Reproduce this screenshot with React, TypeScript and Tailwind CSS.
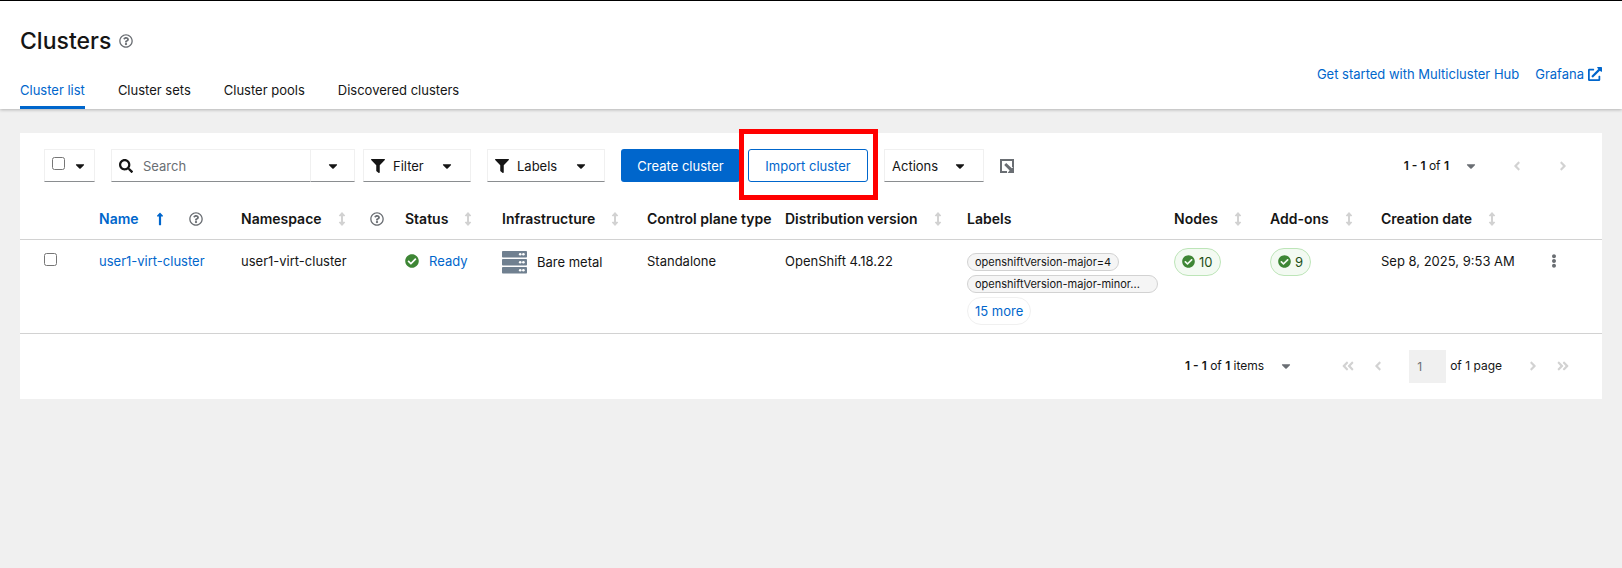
import type { ReactNode } from "react";
import {
  FaAngleDoubleLeft,
  FaAngleDoubleRight,
  FaAngleLeft,
  FaAngleRight,
  FaCaretDown,
  FaCheckCircle,
  FaEllipsisV,
  FaExternalLinkAlt,
  FaFilter,
  FaLongArrowAltUp,
  FaRegQuestionCircle,
  FaSearch,
} from "react-icons/fa";

const tabs = ["Cluster list", "Cluster sets", "Cluster pools", "Discovered clusters"];

interface Column {
  label: string;
  width: string;
  sort?: "active" | "idle";
  help?: boolean;
}

// "Labels" has no width of its own and takes up the remaining space
const columns: Column[] = [
  { label: "Name", width: "w-[142px]", sort: "active", help: true },
  { label: "Namespace", width: "w-[164px]", sort: "idle", help: true },
  { label: "Status", width: "w-[97px]", sort: "idle" },
  { label: "Infrastructure", width: "w-[145px]", sort: "idle" },
  { label: "Control plane type", width: "w-[138px]" },
  { label: "Distribution version", width: "w-[182px]", sort: "idle" },
  { label: "Labels", width: "" },
  { label: "Nodes", width: "w-24", sort: "idle" },
  { label: "Add-ons", width: "w-[111px]", sort: "idle" },
  { label: "Creation date", width: "w-[166px]", sort: "idle" },
];

function SortIcon() {
  return (
    <svg viewBox="0 0 8 14" className="h-3.5 w-2 fill-[#d2d2d2]" aria-hidden="true">
      <path d="M4 0 7.200 3.500 6.500 4.200H5v5.600h1.500l.7.7L4 14 .8 10.500l.7-.7H3V4.200H1.500L.8 3.500z" />
    </svg>
  );
}

function ServerIcon() {
  return (
    <svg viewBox="0 0 25 23" className="h-[23px] w-[25px] shrink-0" aria-hidden="true">
      {[0, 8, 16].map((y) => (
        <g key={y}>
          <rect x="0" y={y} width="25" height="6.600" rx="0.8" fill="#708090" />
          <circle cx="18.200" cy={y + 3.3} r="1.300" fill="#fff" />
          <circle cx="21.400" cy={y + 3.3} r="1.300" fill="#fff" />
        </g>
      ))}
    </svg>
  );
}

function ExportIcon() {
  return (
    <svg viewBox="0 0 14 14" className="h-3.5 w-3.5" fill="#6a6e73" aria-hidden="true">
      <path d="M0 0h14v8h-2V2H2v10h5v2H0z" />
      <path d="M4.200 6 6.200 4l5.600 5.200L14 7.600V14H7.600l2-2.400z" />
    </svg>
  );
}

function StatusPill({ count }: { count: number }) {
  return (
    <span className="inline-flex h-7 items-center gap-1 rounded-full border border-[#bde5b8] bg-[#f3faf2] px-[7px] text-[#1e4f18]">
      <FaCheckCircle className="h-[13px] w-[13px] text-[#3e8635]" />
      {count}
    </span>
  );
}

function Dropdown({ children, className }: { children: ReactNode; className: string }) {
  return (
    <button
      className={`flex h-[33px] items-center justify-between border border-[#f0f0f0] border-b-[#8a8d90] pl-[7px] pr-4 ${className}`}
    >
      <span className="flex items-center gap-2">{children}</span>
      <FaCaretDown className="h-3.5 w-3.5" />
    </button>
  );
}

function PageButton({ label, children }: { label: string; children: ReactNode }) {
  return (
    <button disabled aria-label={label} className="flex h-8 items-center justify-center px-2 text-[#d2d2d2]">
      {children}
    </button>
  );
}

export default function App() {
  return (
    <div className="min-h-screen bg-[#f0f0f0] font-['Inter','Liberation_Sans',sans-serif] text-[13px] leading-5 text-[#151515]">
      <header className="relative flex items-center justify-between border-t border-black bg-white px-5 shadow-[0_1px_3px_rgba(3,3,3,0.25)]">
        <div>
          <div className="flex items-center gap-2 pt-6">
            <h1 className="text-[23px] leading-8 font-medium">Clusters</h1>
            <button aria-label="About clusters" className="text-[#6a6e73]">
              <FaRegQuestionCircle className="h-3.5 w-3.5" />
            </button>
          </div>
          <nav className="mt-[23px] flex gap-[33px]">
            {tabs.map((tab, i) => (
              <a
                key={tab}
                href="#"
                className={`border-b-[3px] pb-1.5 ${i === 0 ? "border-[#06c] text-[#06c]" : "border-transparent"}`}
              >
                {tab}
              </a>
            ))}
          </nav>
        </div>
        <div className="mt-[38px] flex gap-4 text-[#06c]">
          <a href="#">Get started with Multicluster Hub</a>
          <a href="#" className="flex items-center gap-1">
            Grafana
            <FaExternalLinkAlt className="h-3.5 w-3.5" />
          </a>
        </div>
      </header>

      <main className="mx-5 mt-6 bg-white">
        <div className="flex items-center px-6 pt-4">
          <div className="flex h-[33px] w-[51px] items-center gap-2 border border-[#f0f0f0] border-b-[#8a8d90] pl-[7px]">
            <input type="checkbox" aria-label="Select all" className="mb-1 h-[13px] w-[13px]" />
            <button aria-label="Selection options">
              <FaCaretDown className="h-3.5 w-3.5" />
            </button>
          </div>

          <div className="ml-4 flex">
            <label className="flex h-[33px] w-[200px] items-center gap-2.5 border border-[#f0f0f0] border-b-[#8a8d90] pl-[7px]">
              <FaSearch className="h-3.5 w-3.5 shrink-0" />
              <input
                type="text"
                placeholder="Search"
                aria-label="Search"
                className="w-full min-w-0 outline-none placeholder:text-[#6a6e73]"
              />
            </label>
            <button
              aria-label="Search options"
              className="flex w-11 items-center justify-center border border-l-0 border-[#f0f0f0] border-b-[#8a8d90]"
            >
              <FaCaretDown className="h-3.5 w-3.5" />
            </button>
          </div>

          <Dropdown className="ml-2 w-[108px]">
            <FaFilter className="h-3.5 w-3.5" />
            Filter
          </Dropdown>
          <Dropdown className="ml-4 w-[118px]">
            <FaFilter className="h-3.5 w-3.5" />
            Labels
          </Dropdown>

          <button className="ml-4 h-[33px] w-[119px] rounded-[3px] bg-[#06c] text-white">Create cluster</button>
          <div className="relative ml-2">
            <button className="h-[33px] w-[120px] rounded-[3px] border border-[#06c] text-[#06c]">
              Import cluster
            </button>
            <div className="pointer-events-none absolute -top-5 -right-[10px] -bottom-[18px] -left-[9px] border-[5px] border-[#f00]" />
          </div>
          <Dropdown className="ml-4 w-[100px]">Actions</Dropdown>
          <button aria-label="Export" className="ml-4">
            <ExportIcon />
          </button>

          <div className="ml-auto flex items-center">
            <button className="flex items-center gap-[15px] text-xs">
              <span>
                <b className="font-semibold">1 - 1</b> of <b className="font-semibold">1</b>
              </span>
              <FaCaretDown className="h-3.5 w-3.5 text-[#6a6e73]" />
            </button>
            <div className="ml-6 flex gap-4">
              <PageButton label="Previous page">
                <FaAngleLeft className="h-3.5 w-3.5" />
              </PageButton>
              <PageButton label="Next page">
                <FaAngleRight className="h-3.5 w-3.5" />
              </PageButton>
            </div>
          </div>
        </div>

        <table className="mt-[18px] w-full table-fixed border-collapse text-left">
          <thead>
            <tr className="h-[39px] border-b border-[#d2d2d2] text-sm">
              <th className="w-[79px]" />
              {columns.map(({ label, width, sort, help }) => (
                <th key={label} className={`font-semibold whitespace-nowrap ${width}`}>
                  <div className="flex items-center">
                    {sort ? (
                      <button className={`flex items-center gap-4 ${sort === "active" ? "text-[#06c]" : ""}`}>
                        {label}
                        {sort === "active" ? <FaLongArrowAltUp className="h-3.5 w-2.5" /> : <SortIcon />}
                      </button>
                    ) : (
                      label
                    )}
                    {help && (
                      <button aria-label={`About ${label}`} className="ml-6 text-[#6a6e73]">
                        <FaRegQuestionCircle className="h-3.5 w-3.5" />
                      </button>
                    )}
                  </div>
                </th>
              ))}
              <th className="w-[55px]" />
            </tr>
          </thead>
          <tbody>
            <tr className="border-b border-[#d2d2d2] align-top">
              <td className="pt-[13px] pl-6">
                <input type="checkbox" aria-label="Select user1-virt-cluster" className="block h-[13px] w-[13px]" />
              </td>
              <td className="pt-[11px]">
                <a href="#" className="text-[#06c]">
                  user1-virt-cluster
                </a>
              </td>
              <td className="pt-[11px]">user1-virt-cluster</td>
              <td className="pt-[11px]">
                <span className="flex items-center gap-2.5">
                  <FaCheckCircle className="h-3.5 w-3.5 text-[#3e8635]" />
                  <a href="#" className="text-[#06c]">
                    Ready
                  </a>
                </span>
              </td>
              <td className="pt-[11px]">
                <span className="flex items-center gap-2.5">
                  <ServerIcon />
                  Bare metal
                </span>
              </td>
              <td className="pt-[11px]">Standalone</td>
              <td className="pt-[11px]">OpenShift 4.18.22</td>
              <td className="pt-[13px] pb-2">
                <div className="flex flex-col items-start gap-1">
                  <span className="rounded-full border border-[#d2d2d2] bg-[#f5f5f5] px-[7px] text-[11px] leading-4">
                    openshiftVersion-major=4
                  </span>
                  <span className="w-[191px] rounded-full border border-[#d2d2d2] bg-[#f5f5f5] px-[7px] text-[11px] leading-4">
                    openshiftVersion-major-minor...
                  </span>
                  <button className="rounded-full border border-[#f0f0f0] px-[7px] leading-[26px] text-[#06c]">
                    15 more
                  </button>
                </div>
              </td>
              <td className="pt-2">
                <StatusPill count={10} />
              </td>
              <td className="pt-2">
                <StatusPill count={9} />
              </td>
              <td className="pt-[11px]">Sep 8, 2025, 9:53 AM</td>
              <td className="pt-3.5">
                <button aria-label="Row actions" className="block text-[#6a6e73]">
                  <FaEllipsisV className="h-3.5 w-3.5" />
                </button>
              </td>
            </tr>
          </tbody>
        </table>

        <div className="flex items-center justify-end py-4 pr-6 text-xs">
          <button className="flex items-center gap-[15px]">
            <span>
              <b className="font-semibold">1 - 1</b> of <b className="font-semibold">1</b> items
            </span>
            <FaCaretDown className="h-3.5 w-3.5 text-[#6a6e73]" />
          </button>
          <div className="ml-10 flex">
            <PageButton label="First page">
              <FaAngleDoubleLeft className="h-3.5 w-3.5" />
            </PageButton>
            <PageButton label="Previous page">
              <FaAngleLeft className="h-3.5 w-3.5" />
            </PageButton>
          </div>
          <label className="ml-4 flex items-center gap-1">
            <input
              type="text"
              disabled
              defaultValue="1"
              aria-label="Current page"
              className="h-[33px] w-[37px] bg-[#f0f0f0] pl-2 text-[#6a6e73]"
            />
            of 1 page
          </label>
          <div className="ml-4 flex">
            <PageButton label="Next page">
              <FaAngleRight className="h-3.5 w-3.5" />
            </PageButton>
            <PageButton label="Last page">
              <FaAngleDoubleRight className="h-3.5 w-3.5" />
            </PageButton>
          </div>
        </div>
      </main>
    </div>
  );
}
